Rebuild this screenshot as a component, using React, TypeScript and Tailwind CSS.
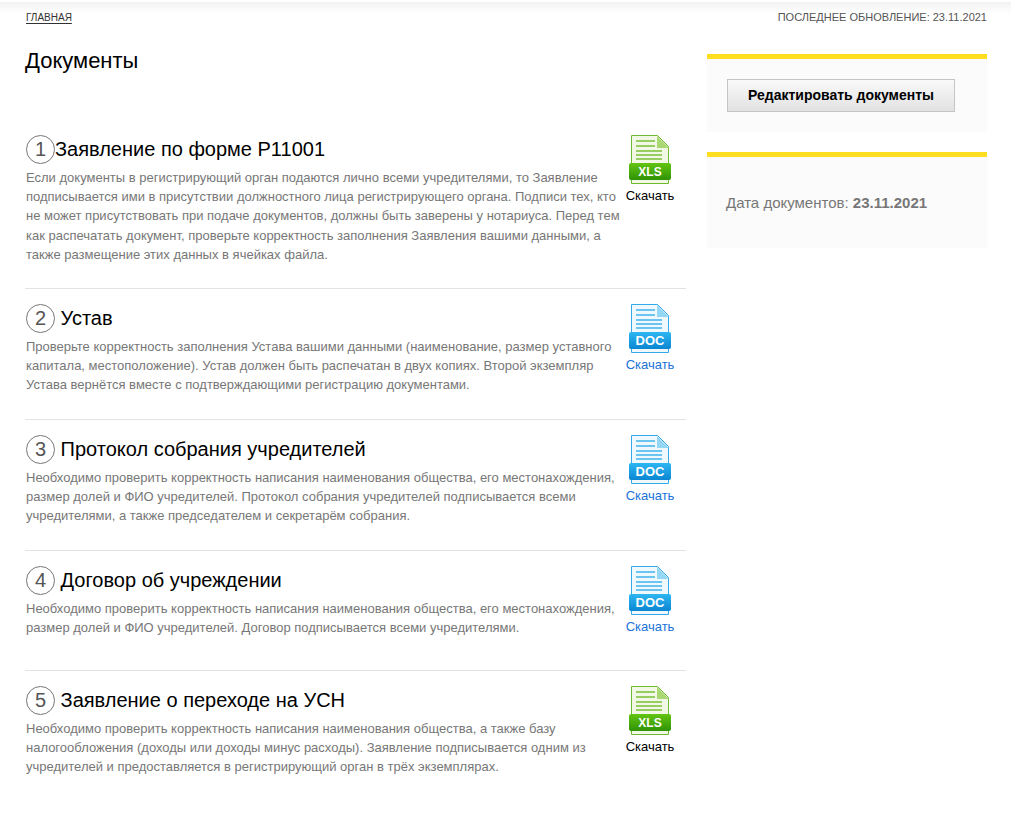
const font = "font-['Liberation_Sans',Arial,sans-serif]";

type Doc = { n: number; title: string; text: string; kind: "xls" | "doc"; tight?: boolean; height: string };

const docs: Doc[] = [
  {
    n: 1,
    title: "Заявление по форме Р11001",
    tight: true,
    kind: "xls",
    height: "h-[169px]",
    text: "Если документы в регистрирующий орган подаются лично всеми учредителями, то Заявление подписывается ими в присутствии должностного лица регистрирующего органа. Подписи тех, кто не может присутствовать при подаче документов, должны быть заверены у нотариуса. Перед тем как распечатать документ, проверьте корректность заполнения Заявления вашими данными, а также размещение этих данных в ячейках файла.",
  },
  {
    n: 2,
    title: "Устав",
    kind: "doc",
    height: "h-[131px]",
    text: "Проверьте корректность заполнения Устава вашими данными (наименование, размер уставного капитала, местоположение). Устав должен быть распечатан в двух копиях. Второй экземпляр Устава вернётся вместе с подтверждающими регистрацию документами.",
  },
  {
    n: 3,
    title: "Протокол собрания учредителей",
    kind: "doc",
    height: "h-[131px]",
    text: "Необходимо проверить корректность написания наименования общества, его местонахождения, размер долей и ФИО учредителей. Протокол собрания учредителей подписывается всеми учредителями, а также председателем и секретарём собрания.",
  },
  {
    n: 4,
    title: "Договор об учреждении",
    kind: "doc",
    height: "h-[120px]",
    text: "Необходимо проверить корректность написания наименования общества, его местонахождения, размер долей и ФИО учредителей. Договор подписывается всеми учредителями.",
  },
  {
    n: 5,
    title: "Заявление о переходе на УСН",
    kind: "xls",
    height: "h-[131px]",
    text: "Необходимо проверить корректность написания наименования общества, а также базу налогообложения (доходы или доходы минус расходы). Заявление подписывается одним из учредителей и предоставляется в регистрирующий орган в трёх экземплярах.",
  },
];

function FileIcon({ kind }: { kind: "xls" | "doc" }) {
  const xls = kind === "xls";
  const edge = xls ? "#6fb92e" : "#35a9e8";
  const fill = xls ? "#f1f8e6" : "#eef8fd";
  const line = xls ? "#98cd62" : "#6cc4f0";
  const fold = xls ? "#a9d872" : "#93d6f6";
  const top = xls ? "#63c412" : "#2db6f2";
  const bottom = xls ? "#2f9306" : "#0b86d2";
  const id = `band-${kind}`;
  return (
    <svg width="42" height="50" viewBox="0 0 42 50" className="block">
      <defs>
        <linearGradient id={id} x1="0" y1="0" x2="0" y2="1">
          <stop offset="0" stopColor={top} />
          <stop offset="1" stopColor={bottom} />
        </linearGradient>
      </defs>
      <path d="M2.5.5H28.5L39.5 11.5V48.5H2.5Z" fill={fill} stroke={edge} />
      <path d="M28 1V13H40Z" fill={fold} />
      <path d="M7 5h19v2H7zM7 10h19v2H7zM7 15h26v2H7zM7 19h26v2H7zM7 23h26v2H7z" fill={line} />
      <rect x="0" y="28" width="42" height="17" rx="2" fill={`url(#${id})`} />
      <text
        x="21"
        y={xls ? 41 : 40.5}
        textAnchor="middle"
        fontSize={xls ? 12 : 13}
        fontWeight="700"
        fontFamily="'Liberation Sans', Arial, sans-serif"
        fill="#fff"
      >
        {kind.toUpperCase()}
      </text>
    </svg>
  );
}

function DocRow({ doc, last }: { doc: Doc; last: boolean }) {
  return (
    <section className={`flex justify-between pt-[15px] ${doc.height} ${last ? "" : "border-b border-[#e3e3e3]"}`}>
      <div className="w-[600px]">
        <h2 className="text-[20px] leading-[28px] min-h-[30px] text-black mb-[3px] pl-px">
          <span className="inline-block w-[29px] h-[29px] rounded-full border border-[#777] text-center text-[#555] leading-[27px] align-top">
            {doc.n}
          </span>
          {doc.tight ? "" : " "}
          {doc.title}
        </h2>
        <p className="text-[13px] leading-[19.2px] text-[#777] pl-px">{doc.text}</p>
      </div>
      <a className="w-[50px] flex flex-col items-center mr-[11px]">
        <FileIcon kind={doc.kind} />
        <span className={`text-[13px] leading-[14px] mt-[4px] ${doc.kind === "xls" ? "text-black" : "text-[#1a73d8]"}`}>Скачать</span>
      </a>
    </section>
  );
}

export default function App() {
  return (
    <div className={`${font} relative min-h-[820px] w-full bg-white`}>
      <div className="absolute left-0 right-0 top-[2px] h-[12px] bg-gradient-to-b from-[#f3f3f3] to-white" />
      <div className="relative px-[25px] pr-[24px]">
        <div className="flex justify-between items-start pt-[10px]">
          <a className="text-[10px] leading-[14px] text-[#333] underline underline-offset-2 pl-px pt-[1px]">ГЛАВНАЯ</a>
          <span className="text-[11px] leading-[14px] text-[#555]">ПОСЛЕДНЕЕ ОБНОВЛЕНИЕ: 23.11.2021</span>
        </div>
        <div className="flex justify-between mt-[3px]">
          <main className="w-[661px]">
            <h1 className="text-[22px] leading-[30px] text-black mt-[18px] mb-[44px]">Документы</h1>
            {docs.map((d, i) => (
              <DocRow key={d.n} doc={d} last={i === docs.length - 1} />
            ))}
          </main>
          <aside className="w-[280px] mt-[26px]">
            <div className="border-t-[5px] border-[#ffdd21] bg-[#fbfbfb] h-[78px] pt-[20px] pl-[20px]">
              <button className="w-[228px] h-[33px] border border-[#c4c4c4] bg-gradient-to-b from-[#f9f9f9] to-[#e2e2e2] text-[14px] font-bold text-black">
                Редактировать документы
              </button>
            </div>
            <div className="mt-[20px] border-t-[5px] border-[#ffdd21] bg-[#fbfbfb] h-[96px] pt-[36px] pl-[19px] text-[15px] leading-[20px] text-[#777]">
              Дата документов: <b>23.11.2021</b>
            </div>
          </aside>
        </div>
      </div>
    </div>
  );
}
